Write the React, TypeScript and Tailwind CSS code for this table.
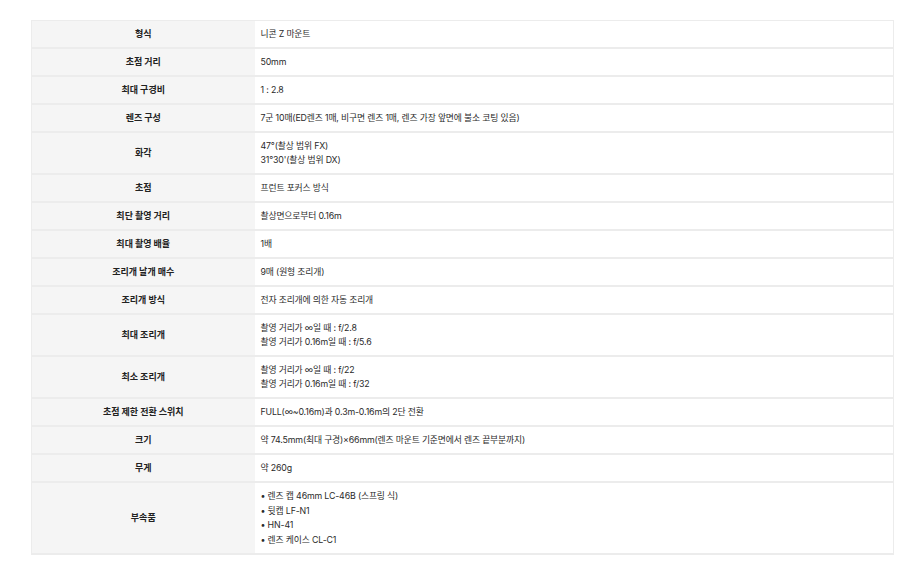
const rows: { label: string; value: string[]; list?: boolean }[] = [
  { label: "형식", value: ["니콘 Z 마운트"] },
  { label: "초점 거리", value: ["50mm"] },
  { label: "최대 구경비", value: ["1 : 2.8"] },
  { label: "렌즈 구성", value: ["7군 10매(ED렌즈 1매, 비구면 렌즈 1매, 렌즈 가장 앞면에 불소 코팅 있음)"] },
  { label: "화각", value: ["47°(촬상 범위 FX)", "31°30'(촬상 범위 DX)"] },
  { label: "초점", value: ["프런트 포커스 방식"] },
  { label: "최단 촬영 거리", value: ["촬상면으로부터 0.16m"] },
  { label: "최대 촬영 배율", value: ["1배"] },
  { label: "조리개 날개 매수", value: ["9매 (원형 조리개)"] },
  { label: "조리개 방식", value: ["전자 조리개에 의한 자동 조리개"] },
  { label: "최대 조리개", value: ["촬영 거리가 ∞일 때 : f/2.8", "촬영 거리가 0.16m일 때 : f/5.6"] },
  { label: "최소 조리개", value: ["촬영 거리가 ∞일 때 : f/22", "촬영 거리가 0.16m일 때 : f/32"] },
  { label: "초점 제한 전환 스위치", value: ["FULL(∞~0.16m)과 0.3m-0.16m의 2단 전환"] },
  { label: "크기", value: ["약 74.5mm(최대 구경)×66mm(렌즈 마운트 기준면에서 렌즈 끝부분까지)"] },
  { label: "무게", value: ["약 260g"] },
  { label: "부속품", value: ["렌즈 캡 46mm LC-46B (스프링 식)", "뒷캡 LF-N1", "HN-41", "렌즈 케이스 CL-C1"], list: true },
];

export default function App() {
  return (
    <div className="w-[920px] h-[574px] bg-white pt-[20px] pl-[31px] font-['Noto_Sans_CJK_KR','Noto_Sans',sans-serif]">
      <table className="w-[863px] border-collapse border border-[#ececec] text-[9px] leading-[14px]">
        <tbody>
          {rows.map((r) => (
            <tr key={r.label} className="border-b-2 border-[#ececec]">
              <th className="w-[223px] bg-[#f5f5f5] text-center font-bold text-[#222] align-middle">{r.label}</th>
              <td className="pl-[6px] py-[6px] text-[#2a2a2a] align-middle font-['Inter','Noto_Sans_CJK_KR',sans-serif] text-[8.8px] tracking-[-0.15px]">
                {r.value.map((v) => (
                  <div key={v} className={r.list ? "h-[14.5px] leading-[14.5px]" : "h-[14px] leading-[14px]"}>
                    {r.list ? "• " + v : v}
                  </div>
                ))}
              </td>
            </tr>
          ))}
        </tbody>
      </table>
    </div>
  );
}
